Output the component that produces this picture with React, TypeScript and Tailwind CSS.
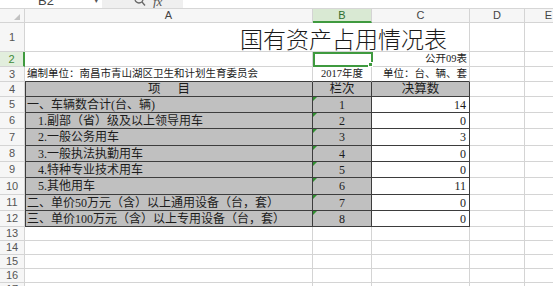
import React from 'react';

type Item = {
  label: string;
  indent: boolean;
  no: string;
  val: string;
  h: string;
};

const items: Item[] = [
  { label: '一、车辆数合计(台、辆)', indent: false, no: '1', val: '14', h: 'h-[16px]' },
  { label: '1.副部（省）级及以上领导用车', indent: true, no: '2', val: '0', h: 'h-[16px]' },
  { label: '2.一般公务用车', indent: true, no: '3', val: '3', h: 'h-[17px]' },
  { label: '3.一般执法执勤用车', indent: true, no: '4', val: '0', h: 'h-[16px]' },
  { label: '4.特种专业技术用车', indent: true, no: '5', val: '0', h: 'h-[16px]' },
  { label: '5.其他用车', indent: true, no: '6', val: '11', h: 'h-[17px]' },
  { label: '二、单价50万元（含）以上通用设备（台，套）', indent: false, no: '7', val: '0', h: 'h-[16px]' },
  { label: '三、单价100万元（含）以上专用设备（台，套）', indent: false, no: '8', val: '0', h: 'h-[16px]' },
];

const cell = 'shrink-0 h-full border-r border-b flex items-center overflow-hidden whitespace-nowrap';

function RowHead({ n, active = false }: { n: number | string; active?: boolean }) {
  if (active) {
    return (
      <div className="w-[25px] shrink-0 h-full border-b border-[#d4d4d4] border-r-2 border-r-[#3f9a3f] bg-[#e2eedd] flex items-center justify-center text-[11px] text-[#3f8a3a] font-['Liberation_Sans',sans-serif]">
        {n}
      </div>
    );
  }
  return (
    <div className="w-[25px] shrink-0 h-full border-r border-b border-[#d4d4d4] bg-[#f6f6f6] flex items-center justify-center text-[11px] text-[#555] font-['Liberation_Sans',sans-serif]">
      {n}
    </div>
  );
}

function Flag() {
  return (
    <svg className="absolute left-0 top-0" width="4" height="4" viewBox="0 0 4 4">
      <polygon points="0,0 4,0 0,4" fill="#2f8f2f" />
    </svg>
  );
}

function EmptyTail() {
  return (
    <>
      <div className={`${cell} w-[55px] border-[#d4d4d4]`} />
      <div className={`${cell} w-[48px] border-[#d4d4d4]`} />
    </>
  );
}

export default function App() {
  return (
    <div className="w-[553px] h-[286px] overflow-hidden bg-white text-[#1c1c1c] font-['Liberation_Serif','Noto_Sans_CJK_SC',serif]">
      {/* formula bar, mostly scrolled off */}
      <div className="flex h-[9px] border-b border-[#d6d6d6] overflow-hidden items-start">
        <div className="w-[102px] shrink-0 flex items-start">
          <span className="ml-[38px] -mt-[9px] text-[13px] text-[#444] font-['Liberation_Sans',sans-serif]">B2</span>
          <span className="ml-[40px] -mt-[6px] text-[9px] text-[#555]">▾</span>
        </div>
        <div className="w-[81px] h-[8px] shrink-0 bg-[#efefef] flex items-start">
          <svg className="ml-[32px] -mt-[6px]" width="12" height="13" viewBox="0 0 12 13">
            <circle cx="5" cy="5" r="4" fill="none" stroke="#666" strokeWidth="1.3" />
            <line x1="8" y1="8" x2="11" y2="11.5" stroke="#666" strokeWidth="1.3" />
          </svg>
          <span className="ml-[7px] -mt-[8px] text-[13px] italic text-[#555] font-['Liberation_Serif',serif]">fx</span>
        </div>
        <div className="flex-1" />
      </div>

      {/* column header */}
      <div className="flex h-[14px] bg-[#f6f6f6] text-[11px] text-[#444] font-['Liberation_Sans',sans-serif]">
        <div className="w-[25px] shrink-0 h-full border-r border-b border-[#d4d4d4] flex items-end justify-end pr-[4px] pb-[2px]">
          <svg width="6" height="6" viewBox="0 0 6 6">
            <polygon points="6,0 6,6 0,6" fill="#c2c2c2" />
          </svg>
        </div>
        <div className="w-[288px] shrink-0 h-full border-r border-b border-[#d4d4d4] flex items-center justify-center">A</div>
        <div className="w-[59px] shrink-0 h-full border-r border-[#d4d4d4] border-b-2 border-b-[#3f9a3f] bg-[#d9e9d3] flex items-center justify-center text-[#2f6f2f]">B</div>
        <div className="w-[98px] shrink-0 h-full border-r border-b border-[#d4d4d4] flex items-center justify-center">C</div>
        <div className="w-[55px] shrink-0 h-full border-r border-b border-[#d4d4d4] flex items-center justify-center">D</div>
        <div className="w-[48px] shrink-0 h-full border-r border-b border-[#d4d4d4] flex items-center justify-center">E</div>
      </div>

      {/* row 1: title */}
      <div className="flex h-[29px]">
        <RowHead n={1} />
        <div className={`${cell} w-[445px] border-[#d4d4d4] items-end justify-end pr-[22px] pb-[1px]`}>
          <span className="text-[23px] leading-[23px] text-[#1a1a1a] font-['Noto_Sans_CJK_SC',sans-serif] font-light">国有资产占用情况表</span>
        </div>
        <EmptyTail />
      </div>

      {/* row 2 */}
      <div className="flex h-[15px] text-[10.5px]">
        <RowHead n={2} active />
        <div className={`${cell} w-[288px] border-[#d4d4d4]`} />
        <div className={`${cell} w-[59px] border-[#d4d4d4] relative overflow-visible`}>
          <div className="absolute left-0 top-0 w-[60px] h-[15px] border-2 border-[#3f9a3f]" />
          <div className="absolute -right-[2px] -bottom-[1px] w-[5px] h-[5px] bg-[#3f9a3f] border border-white" />
        </div>
        <div className={`${cell} w-[98px] border-[#d4d4d4] justify-end pr-[2px]`}>公开09表</div>
        <EmptyTail />
      </div>

      {/* row 3 */}
      <div className="flex h-[15px] text-[10.5px]">
        <RowHead n={3} />
        <div className={`${cell} w-[288px] border-[#d4d4d4] border-b-[#3d3d3d] pl-[2px]`}>编制单位：南昌市青山湖区卫生和计划生育委员会</div>
        <div className={`${cell} w-[59px] border-[#d4d4d4] border-b-[#3d3d3d] justify-center`}>2017年度</div>
        <div className={`${cell} w-[98px] border-[#d4d4d4] border-b-[#3d3d3d] justify-end pr-[2px]`}>单位：台、辆、套</div>
        <EmptyTail />
      </div>

      {/* row 4: table header */}
      <div className="flex h-[15px] text-[12.5px]">
        <RowHead n={4} />
        <div className={`${cell} w-[288px] border-l border-[#3d3d3d] bg-[#c0c0c0] justify-center gap-[17px]`}>
          <span>项</span>
          <span>目</span>
        </div>
        <div className={`${cell} w-[59px] border-[#3d3d3d] bg-[#c0c0c0] justify-center`}>栏次</div>
        <div className={`${cell} w-[98px] border-[#3d3d3d] bg-[#c0c0c0] justify-center`}>决算数</div>
        <EmptyTail />
      </div>

      {/* rows 5-12: data */}
      {items.map((it, i) => (
        <div key={it.no} className={`flex ${it.h} text-[12px]`}>
          <RowHead n={i + 5} />
          <div className={`${cell} w-[288px] border-l border-[#3d3d3d] bg-[#c0c0c0] ${it.indent ? 'pl-[12px]' : 'pl-[1px]'}`}>
            {it.label}
          </div>
          <div className={`${cell} w-[59px] border-[#3d3d3d] bg-[#c0c0c0] justify-center relative`}>
            <Flag />
            {it.no}
          </div>
          <div className={`${cell} w-[98px] border-[#3d3d3d] bg-white justify-end pr-[3px]`}>{it.val}</div>
          <EmptyTail />
        </div>
      ))}

      {/* empty rows */}
      {[13, 14, 15, 16, 17].map((n) => (
        <div key={n} className="flex h-[14px]">
          <RowHead n={n} />
          <div className={`${cell} w-[288px] border-[#d4d4d4]`} />
          <div className={`${cell} w-[59px] border-[#d4d4d4]`} />
          <div className={`${cell} w-[98px] border-[#d4d4d4]`} />
          <EmptyTail />
        </div>
      ))}
    </div>
  );
}
